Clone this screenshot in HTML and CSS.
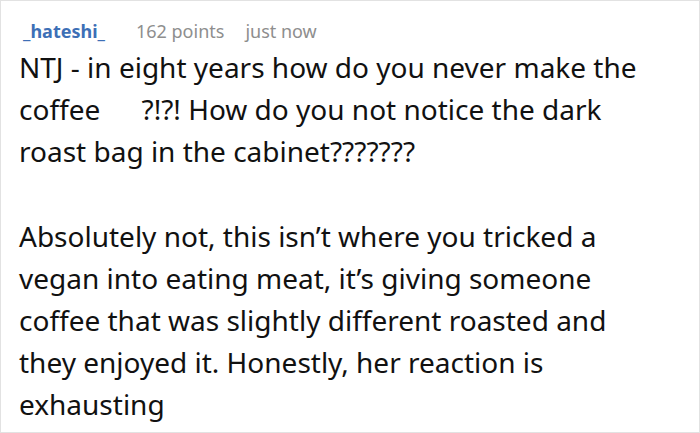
FILE: index.html
```html
<!DOCTYPE html>
<html>
<head>
<meta charset="utf-8">
<link rel="stylesheet" href="styles.css">
</head>
<body>
<div class="card">
  <div class="meta">
    <span class="user">_hateshi_</span>
    <span class="points">162 points</span>
    <span class="time">just now</span>
  </div>
  <div class="body">
    <p>NTJ - in eight years how do you never make the coffee <span class="gap"></span>?!?! How do you not notice the dark roast bag in the cabinet???????</p>
    <p>Absolutely not, this isn’t where you tricked a vegan into eating meat, it’s giving someone coffee that was slightly different roasted and they enjoyed it. Honestly, her reaction is exhausting</p>
  </div>
</div>
</body>
</html>
```
FILE: styles.css
```css
html, body {
  margin: 0;
  padding: 0;
  background: #fff;
}
.card {
  width: 700px;
  height: 433px;
  box-sizing: border-box;
  border: 1px solid #e2e2e2;
  padding: 18px 20px 0 22px;
  font-family: "Noto Sans", sans-serif;
}
.meta {
  display: flex;
  font-size: 18px;
  line-height: 24px;
  color: #8e8e8e;
}
.user {
  color: #3d6fb6;
  font-weight: bold;
  margin-right: 31px;
}
.points {
  margin-right: 21px;
}
.body {
  width: 640px;
  margin-top: 3px;
  margin-left: -4px;
  font-size: 28px;
  line-height: 42px;
  color: #111;
}
.body p {
  margin: 0 0 43px 0;
}
.gap {
  display: inline-block;
  width: 34px;
}
```
